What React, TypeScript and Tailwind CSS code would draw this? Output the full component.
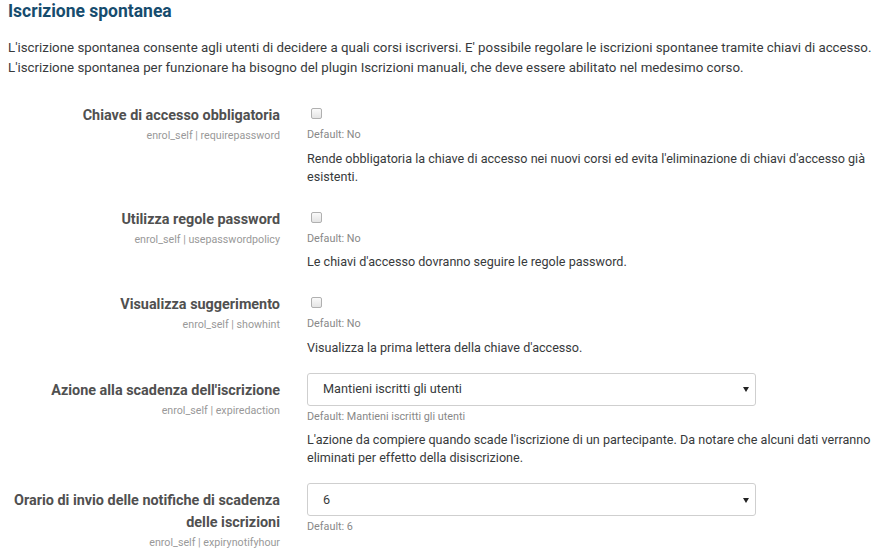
import { ReactNode } from "react";

const FONT = { fontFamily: "Roboto, 'Helvetica Neue', Arial, sans-serif" };

function Row({ label, name, children }: { label: ReactNode; name: string; children: ReactNode }) {
  return (
    <div className="flex">
      <div className="w-[280px] shrink-0 text-right pt-[7px]">
        <div className="text-[14.4px] leading-[22px] font-bold text-[#505050]">{label}</div>
        <div className="text-[10.7px] leading-[14px] mt-[2px] text-[#999]">{name}</div>
      </div>
      <div className="pl-[27px] flex-1">{children}</div>
    </div>
  );
}

function Check() {
  return (
    <div className="h-[30px] pt-[10px] pl-[4px]">
      <span className="block w-[11px] h-[11px] rounded-[2px] border border-[#b0b0b0] bg-gradient-to-b from-[#fafafa] to-[#e4e4e4]" />
    </div>
  );
}

function Select({ value }: { value: string }) {
  return (
    <div className="w-[449px] h-[33px] border border-[#cfcfcf] rounded-[3px] flex items-center justify-between pl-[15px] pr-[6px] text-[12.7px] text-[#373a3c]">
      <span>{value}</span>
      <svg width="6" height="5" viewBox="0 0 6 5" className="mt-[1px]">
        <path d="M0 0H6L3 5Z" fill="#222" />
      </svg>
    </div>
  );
}

function Default({ text, select }: { text: string; select?: boolean }) {
  return (
    <div className={`text-[10.8px] leading-[14px] text-[#888] ${select ? "mt-[4px]" : ""}`}>
      Default: {text}
    </div>
  );
}

function Desc({ children }: { children: ReactNode }) {
  return <div className="text-[12.6px] leading-[18px] text-[#373a3c] mt-[7.5px]">{children}</div>;
}

export default function App() {
  return (
    <div className="w-[882px] h-[557px] bg-white overflow-hidden" style={FONT}>
      <div className="pl-[8px] pt-[1px]">
        <h3 className="text-[17.5px] leading-[20px] font-bold text-[#164c6e]">Iscrizione spontanea</h3>
        <p className="mt-[17px] text-[13.3px] leading-[20px] text-[#373a3c]">
          L'iscrizione spontanea consente agli utenti di decidere a quali corsi iscriversi. E' possibile regolare le iscrizioni spontanee tramite chiavi di accesso.
          <br />
          L'iscrizione spontanea per funzionare ha bisogno del plugin Iscrizioni manuali, che deve essere abilitato nel medesimo corso.
        </p>
      </div>

      <div className="mt-[20px] flex flex-col gap-[16px]">
        <Row label="Chiave di accesso obbligatoria" name="enrol_self | requirepassword">
          <Check />
          <Default text="No" />
          <Desc>
            Rende obbligatoria la chiave di accesso nei nuovi corsi ed evita l'eliminazione di chiavi d'accesso già esistenti.
          </Desc>
        </Row>
        <Row label="Utilizza regole password" name="enrol_self | usepasswordpolicy">
          <Check />
          <Default text="No" />
          <Desc>Le chiavi d'accesso dovranno seguire le regole password.</Desc>
        </Row>
        <Row label="Visualizza suggerimento" name="enrol_self | showhint">
          <Check />
          <Default text="No" />
          <Desc>Visualizza la prima lettera della chiave d'accesso.</Desc>
        </Row>
        <Row label="Azione alla scadenza dell'iscrizione" name="enrol_self | expiredaction">
          <Select value="Mantieni iscritti gli utenti" />
          <Default text="Mantieni iscritti gli utenti" select />
          <Desc>
            L'azione da compiere quando scade l'iscrizione di un partecipante. Da notare che alcuni dati verranno eliminati per effetto della disiscrizione.
          </Desc>
        </Row>
        <Row
          label={
            <>
              Orario di invio delle notifiche di scadenza
              <br />
              delle iscrizioni
            </>
          }
          name="enrol_self | expirynotifyhour"
        >
          <Select value="6" />
          <Default text="6" select />
        </Row>
      </div>
    </div>
  );
}
